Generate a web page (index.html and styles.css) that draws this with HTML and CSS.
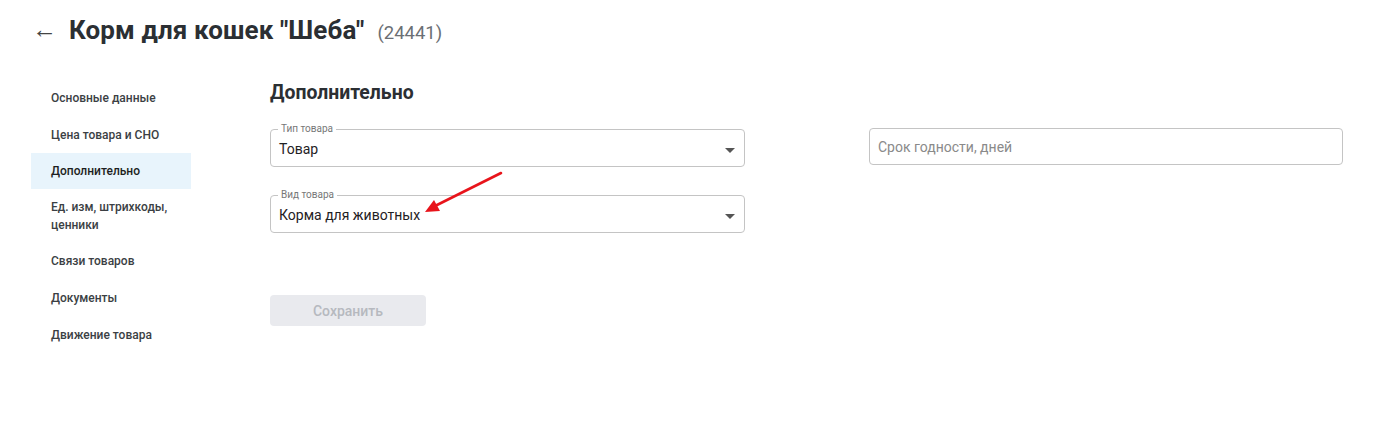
FILE: index.html
```html
<!DOCTYPE html>
<html lang="ru">
<head>
<meta charset="UTF-8">
<title>Корм для кошек "Шеба"</title>
<link rel="stylesheet" href="styles.css">
</head>
<body>

<div class="header">
    <span class="back">&larr;</span>
    <h1 class="title">Корм для кошек "Шеба"</h1>
    <span class="code">(24441)</span>
</div>

<div class="layout">
    <ul class="menu">
        <li>Основные данные</li>
        <li>Цена товара и СНО</li>
        <li class="active">Дополнительно</li>
        <li class="two">Ед. изм, штрихкоды, ценники</li>
        <li>Связи товаров</li>
        <li>Документы</li>
        <li>Движение товара</li>
    </ul>

    <div class="content">
        <h2 class="section">Дополнительно</h2>
        <div class="grid">
            <fieldset class="field">
                <legend>Тип товара</legend>
                <span class="value">Товар</span>
                <span class="caret"></span>
            </fieldset>
            <div class="field plain">
                <span class="placeholder">Срок годности, дней</span>
            </div>
            <fieldset class="field">
                <legend>Вид товара</legend>
                <span class="value">Корма для животных</span>
                <span class="caret"></span>
            </fieldset>
        </div>
        <button class="save" disabled>Сохранить</button>
    </div>
</div>

<!-- annotation arrow -->
<svg class="pointer" width="90" height="50" viewBox="0 0 90 50">
    <line x1="80" y1="4" x2="12" y2="38" stroke="#e8141b" stroke-width="2.6" stroke-linecap="round"/>
    <polygon points="4,43 13,31 19,42" fill="#e8141b"/>
</svg>

</body>
</html>
```

FILE: styles.css
```css
body {
    margin: 0;
    background: #fff;
    font-family: Roboto, "Noto Sans", sans-serif;
    color: #333;
}
.header {
    display: flex;
    align-items: baseline;
    padding: 15px 0 0 32px;
    height: 45px;
}
.back {
    font-size: 25px;
    color: #444;
    margin-right: 12px;
    position: relative;
    top: -1px;
}
.title {
    margin: 0;
    font-size: 26px;
    font-weight: 700;
    color: #2b2f33;
    letter-spacing: 0.1px;
}
.code {
    margin-left: 13px;
    font-size: 18.5px;
    color: #6b6f74;
}
.layout {
    display: flex;
    margin-top: 18px;
}
.menu {
    list-style: none;
    margin: 1px 0 0 31px;
    padding: 0;
    width: 160px;
}
.menu li {
    padding: 0 20px;
    height: 37px;
    display: flex;
    align-items: center;
    font-size: 12px;
    font-weight: 500;
    color: #3b3f44;
}
.menu li.two {
    height: 53px;
    line-height: 18px;
    padding-right: 8px;
}
.menu li.active {
    background: #e8f4fc;
    color: #1d1f22;
    height: 36px;
}
.content {
    margin-left: 79px;
}
.section {
    margin: 3px 0 26px;
    font-size: 19.4px;
    font-weight: 700;
    color: #2b2f33;
}
.grid {
    display: grid;
    grid-template-columns: 475px 474px;
    column-gap: 124px;
    row-gap: 29px;
}
.field {
    position: relative;
    margin: 0;
    padding: 0 8px;
    height: 37px;
    box-sizing: border-box;
    border: 1px solid #c4c4c4;
    border-radius: 4px;
    display: flex;
    align-items: center;
}
fieldset.field {
    padding-top: 0;
    padding-bottom: 3px;
    margin-top: -7px;
    height: 44px;
}
.field legend {
    padding: 0 3px;
    margin-left: -1px;
    font-size: 10px;
    color: #777;
    line-height: 12px;
}
.value {
    font-size: 14px;
    color: #1f2124;
}
.caret {
    position: absolute;
    right: 9px;
    top: 50%;
    margin-top: -3px;
    border-left: 5px solid transparent;
    border-right: 5px solid transparent;
    border-top: 5px solid #555;
}
.field.plain {
    margin-top: -2px;
}
.placeholder {
    font-size: 14px;
    color: #8a8a8a;
}
.save {
    margin-top: 62px;
    width: 156px;
    height: 31px;
    border: none;
    border-radius: 4px;
    background: #e9eaee;
    color: #b6b9bf;
    font-family: Roboto, sans-serif;
    font-size: 14px;
    font-weight: 500;
}
.pointer {
    position: absolute;
    left: 421px;
    top: 169px;
}
```
